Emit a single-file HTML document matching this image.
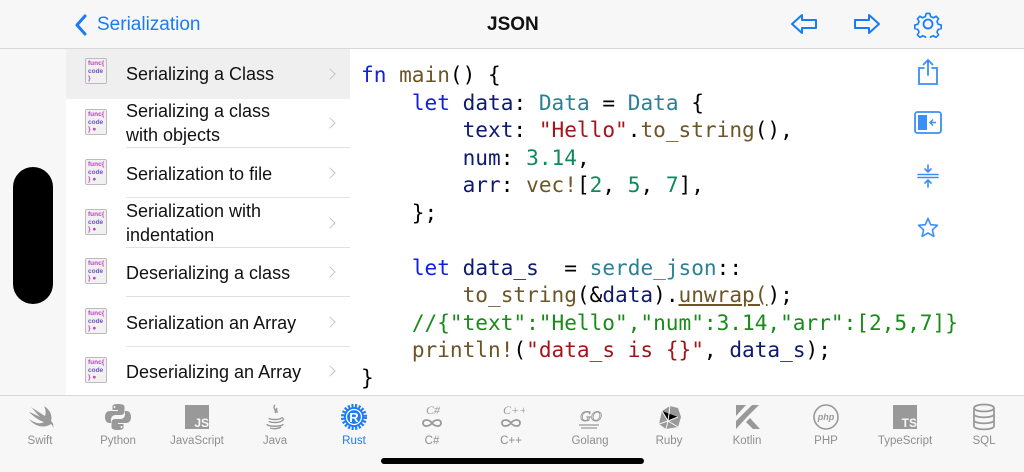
<!DOCTYPE html><html><head><meta charset="utf-8"><style>
*{margin:0;padding:0;box-sizing:border-box}
body{width:1024px;height:472px;overflow:hidden;background:#fff;font-family:"Liberation Sans",sans-serif;position:relative}
.hdr{position:absolute;left:0;top:0;width:1024px;height:49px;background:#f7f7f7;border-bottom:1px solid #d8d8d8}
.side{position:absolute;left:0;top:49px;width:66px;height:346px;background:#f7f7f7}
.pill{position:absolute;left:13px;top:167px;width:40px;height:137px;border-radius:20px;background:#000}
.row{position:absolute;left:66px;width:284px;height:50px}
.row .t{position:absolute;left:60px;font-size:18px;color:#111;line-height:24px}
.row .sep{position:absolute;left:60px;right:0;bottom:0;height:1px;background:#e2e2e2}
.row .ch{position:absolute;right:16px;top:15px;width:8px;height:8px;border-right:1.6px solid #c4c4c6;border-top:1.6px solid #c4c4c6;transform:rotate(45deg)}
.ic{position:absolute;left:19px;width:22px;height:26px;border:1px solid #bbb;border-radius:2px;background:#f1f1f1;font-size:6.5px;line-height:7.5px;font-weight:bold;padding:1px 0 0 2px}
.code{position:absolute;left:361px;top:61px;font-family:"DejaVu Sans Mono",monospace;font-size:21.1px;line-height:27.5px;white-space:pre;color:#000}
.k{color:#1020e0}.v{color:#0d1a70}.ty{color:#2b7f97}.s{color:#a3141c}.n{color:#0f8a5a}.f{color:#6e5528}.c{color:#1a8a1a}
.tab{position:absolute;left:0;top:395px;width:1024px;height:77px;background:#f7f7f7;border-top:1px solid #d8d8d8}
.ti{position:absolute;top:0;width:70px;text-align:center}
.ti .l{position:absolute;top:39px;left:0;width:70px;font-size:11.5px;color:#8e8e8e}
.ti svg{position:absolute;left:21px;top:7px}
</style></head><body>
<div class="hdr">
<svg style="position:absolute;left:74px;top:14px" width="14" height="22" viewBox="0 0 14 22"><path d="M11 2 L3 11 L11 20" fill="none" stroke="#1a7cf5" stroke-width="3" stroke-linecap="round" stroke-linejoin="round"/></svg>
<div style="position:absolute;left:97px;top:14px;font-size:19px;color:#1a7cf5">Serialization</div>
<div style="position:absolute;left:487px;top:14px;font-size:19px;font-weight:bold;color:#111">JSON</div>
<svg style="position:absolute;left:790px;top:12px" width="28" height="24" viewBox="0 0 28 24"><path d="M2 12 L12 3 V8 H26 V16 H12 V21 Z" fill="none" stroke="#1a7cf5" stroke-width="2" stroke-linejoin="round"/></svg>
<svg style="position:absolute;left:853px;top:12px" width="28" height="24" viewBox="0 0 28 24"><path d="M26 12 L16 3 V8 H2 V16 H16 V21 Z" fill="none" stroke="#1a7cf5" stroke-width="2" stroke-linejoin="round"/></svg>
<svg style="position:absolute;left:914px;top:10px" width="28" height="28" viewBox="0 0 28 28"><g fill="none" stroke="#1a7cf5" stroke-width="1.8"><circle cx="14" cy="14" r="4.5"/><path d="M12 2h4l1 3.5 3 1.5 3.2-1.8 2.8 2.8-1.8 3.2 1.3 3 3.5 1v4l-3.5 1-1.3 3 1.8 3.2-2.8 2.8-3.2-1.8-3 1.3-1 3.5h-4l-1-3.5-3-1.3-3.2 1.8-2.8-2.8 1.8-3.2-1.3-3-3.5-1v-4l3.5-1 1.3-3-1.8-3.2 2.8-2.8 3.2 1.8 3-1.5z" transform="translate(14 14) scale(.88) translate(-14 -14)"/></g></svg>
</div>
<div class="side"></div><div class="pill"></div>
<div class="row" style="top:49px;background:#efefef"><div class="ic" style="top:9px;color:#c040c0">func{<br><span style="color:#7050c0">code</span><br>}</div><div class="t" style="top:13px">Serializing a Class</div><div class="ch" style="top:21px"></div></div>
<div class="row" style="top:98px"><div class="ic" style="top:11px;color:#c040c0">func{<br><span style="color:#7050c0">code</span><br>} ●</div><div class="t" style="top:1px">Serializing a class<br>with objects</div><div class="ch" style="top:21px"></div><div class="sep"></div></div>
<div class="row" style="top:148px"><div class="ic" style="top:11px;color:#c040c0">func{<br><span style="color:#7050c0">code</span><br>} ●</div><div class="t" style="top:14px">Serialization to file</div><div class="ch" style="top:21px"></div><div class="sep"></div></div>
<div class="row" style="top:198px"><div class="ic" style="top:11px;color:#c040c0">func{<br><span style="color:#7050c0">code</span><br>} ●</div><div class="t" style="top:1px">Serialization with<br>indentation</div><div class="ch" style="top:21px"></div><div class="sep"></div></div>
<div class="row" style="top:247px"><div class="ic" style="top:11px;color:#c040c0">func{<br><span style="color:#7050c0">code</span><br>} ●</div><div class="t" style="top:14px">Deserializing a class</div><div class="ch" style="top:21px"></div><div class="sep"></div></div>
<div class="row" style="top:297px"><div class="ic" style="top:11px;color:#c040c0">func{<br><span style="color:#7050c0">code</span><br>} ●</div><div class="t" style="top:14px">Serialization an Array</div><div class="ch" style="top:21px"></div><div class="sep"></div></div>
<div class="row" style="top:346px"><div class="ic" style="top:11px;color:#c040c0">func{<br><span style="color:#7050c0">code</span><br>} ●</div><div class="t" style="top:14px">Deserializing an Array</div><div class="ch" style="top:21px"></div></div>
<div class="code"><span class="k">fn</span> <span class="f">main</span>() {
    <span class="k">let</span> <span class="v">data</span>: <span class="ty">Data</span> = <span class="ty">Data</span> {
        <span class="v">text</span>: <span class="s">"Hello"</span>.<span class="f">to_string</span>(),
        <span class="v">num</span>: <span class="n">3.14</span>,
        <span class="v">arr</span>: <span class="f">vec!</span>[<span class="n">2</span>, <span class="n">5</span>, <span class="n">7</span>],
    };

    <span class="k">let</span> <span class="v">data_s</span>  = <span class="ty">serde_json</span>::
        <span class="f">to_string</span>(&amp;<span class="v">data</span>).<span class="f" style="text-decoration:underline">unwrap(</span>);
    <span class="c">//{"text":"Hello","num":3.14,"arr":[2,5,7]}</span>
    <span class="f">println!</span>(<span class="s">"data_s is {}"</span>, <span class="v">data_s</span>);
}</div>
<svg style="position:absolute;left:916px;top:58px" width="24" height="28" viewBox="0 0 24 28"><g fill="none" stroke="#3a8ef5" stroke-width="1.8" stroke-linecap="round"><path d="M8 10H3v16h18V10h-5"/><path d="M12 2v15M7.5 6.5 12 2l4.5 4.5"/></g></svg>
<svg style="position:absolute;left:914px;top:111px" width="28" height="23" viewBox="0 0 28 23"><rect x="1" y="1" width="26" height="21" rx="2.5" fill="none" stroke="#3a8ef5" stroke-width="1.8"/><rect x="4" y="4" width="9" height="15" fill="#3a8ef5"/><path d="M22 11.5h-6M19 8.5l-3 3 3 3" fill="none" stroke="#3a8ef5" stroke-width="1.5"/></svg>
<svg style="position:absolute;left:917px;top:164px" width="22" height="24" viewBox="0 0 22 24"><g fill="none" stroke="#3a8ef5" stroke-width="1.6" stroke-linecap="round"><path d="M1 10.5h20M1 13.5h20M11 1v7M8 5l3 3 3-3M11 23v-7M8 19l3-3 3 3"/></g></svg>
<svg style="position:absolute;left:917px;top:217px" width="22" height="22" viewBox="0 0 22 22"><path d="M11 1.5l2.7 6.2 6.8.6-5.1 4.5 1.5 6.6L11 16l-5.9 3.4 1.5-6.6-5.1-4.5 6.8-.6z" fill="none" stroke="#3a8ef5" stroke-width="1.6" stroke-linejoin="round"/></svg>
<div class="tab">
<div class="ti" style="left:5px"><svg width="28" height="28" viewBox="0 0 28 28"><path d="M3 9c5 5 11 9 15 10-3 2-8 2-15-3 5 7 15 10 22 5 1 1 2 2 2 4 1-3 0-5-2-7 2-6-2-12-7-15 2 4 2 8 1 10C14 10 8 6 5 4c3 3 6 7 9 10C10 12 6 10 3 9z" fill="#999"/></svg><div class="l">Swift</div></div>
<div class="ti" style="left:83px"><svg width="28" height="28" viewBox="0 0 28 28"><path d="M13.5 1C8 1 8.5 3.5 8.5 3.5V7h5.5v1H6C3 8 1 10 1 14s2 6 4.5 6H7v-3.5C7 14 9 12 11.5 12h5.5c2 0 3.5-1.5 3.5-3.5V4c0-2-2-3-7-3zM10.5 3a1 1 0 110 2 1 1 0 010-2z" fill="#999"/><path d="M14.5 27c5.5 0 5-2.5 5-2.5V21H14v-1h8c3 0 5-2 5-6s-2-6-4.5-6H21v3.5C21 14 19 16 16.5 16H11c-2 0-3.5 1.5-3.5 3.5V24c0 2 2 3 7 3zm3-2a1 1 0 110-2 1 1 0 010 2z" fill="#999"/></svg><div class="l">Python</div></div>
<div class="ti" style="left:162px"><svg width="28" height="28" viewBox="0 0 28 28"><rect x="2" y="2" width="24" height="24" fill="#999"/><text x="26" y="24" text-anchor="end" font-family="Liberation Sans" font-weight="bold" font-size="12" fill="#f7f7f7">JS</text></svg><div class="l">JavaScript</div></div>
<div class="ti" style="left:240px"><svg width="28" height="28" viewBox="0 0 28 28"><g fill="none" stroke="#999" stroke-width="1.4"><path d="M14 2c-3 3 2 5 0 8M16 5c-2 2 1 3 0 5"/><path d="M8 15c0 2 12 2 12 0M8 18c0 2 12 2 12 0M6 21c0 3 16 3 16 0M9 25c3 1 8 1 11-1"/><path d="M20 15c3-1 3 3 0 3"/></g></svg><div class="l">Java</div></div>
<div class="ti" style="left:319px"><svg width="28" height="28" viewBox="0 0 28 28"><circle cx="14" cy="14" r="11" fill="none" stroke="#1a7cf5" stroke-width="4" stroke-dasharray="2 1.5"/><circle cx="14" cy="14" r="10" fill="#1a7cf5"/><circle cx="14" cy="14" r="7.5" fill="none" stroke="#fff" stroke-width="1.3"/><text x="14" y="19" text-anchor="middle" font-family="Liberation Sans" font-weight="bold" font-size="13" fill="#fff">R</text></svg><div class="l" style="color:#1a7cf5">Rust</div></div>
<div class="ti" style="left:397px"><svg width="28" height="28" viewBox="0 0 28 28"><text x="8" y="11" font-family="Liberation Serif" font-style="italic" font-size="12" fill="#999">C#</text><path d="M14 20c-3-4-9-4-9 0s6 4 9 0 9-4 9 0-6 4-9 0z" fill="none" stroke="#999" stroke-width="1.8"/></svg><div class="l">C#</div></div>
<div class="ti" style="left:476px"><svg width="28" height="28" viewBox="0 0 28 28"><text x="6" y="11" font-family="Liberation Serif" font-style="italic" font-size="12" fill="#999">C++</text><path d="M14 20c-3-4-9-4-9 0s6 4 9 0 9-4 9 0-6 4-9 0z" fill="none" stroke="#999" stroke-width="1.8"/></svg><div class="l">C++</div></div>
<div class="ti" style="left:555px"><svg width="28" height="28" viewBox="0 0 28 28"><text x="4" y="18" font-family="Liberation Serif" font-style="italic" font-size="15" fill="none" stroke="#999" stroke-width=".9">GO</text><path d="M3 22h20M5 25h16" stroke="#999" stroke-width="1.2"/></svg><div class="l">Golang</div></div>
<div class="ti" style="left:634px"><svg width="28" height="28" viewBox="0 0 28 28"><path d="M4 21 7 8 15 3l8 2 3 9-3 10-12 2z" fill="#999"/><path d="M7 8l6 10 10-4M13 18l-9 3M13 18l-2 8M13 18l10 6M15 3l-2 15" stroke="#f7f7f7" stroke-width="1"/></svg><div class="l">Ruby</div></div>
<div class="ti" style="left:712px"><svg width="28" height="28" viewBox="0 0 28 28"><path d="M3 2h10L3 13zM3 26 14 14l12-12h-7L3 18zM13 19l7 7h7l-10-11z" fill="#999"/></svg><div class="l">Kotlin</div></div>
<div class="ti" style="left:791px"><svg width="28" height="28" viewBox="0 0 28 28"><circle cx="14" cy="14" r="12" fill="none" stroke="#999" stroke-width="1.6"/><text x="14" y="17" text-anchor="middle" font-family="Liberation Sans" font-style="italic" font-weight="bold" font-size="9" fill="#999">php</text></svg><div class="l">PHP</div></div>
<div class="ti" style="left:870px"><svg width="28" height="28" viewBox="0 0 28 28"><rect x="2" y="2" width="24" height="24" fill="#999"/><text x="26" y="24" text-anchor="end" font-family="Liberation Sans" font-weight="bold" font-size="12" fill="#f7f7f7">TS</text></svg><div class="l">TypeScript</div></div>
<div class="ti" style="left:949px"><svg width="28" height="28" viewBox="0 0 28 28"><g fill="none" stroke="#999" stroke-width="1.8"><ellipse cx="14" cy="5" rx="10" ry="3.5"/><path d="M4 5v18c0 4.5 20 4.5 20 0V5M4 11c0 4.5 20 4.5 20 0M4 17c0 4.5 20 4.5 20 0"/></g></svg><div class="l">SQL</div></div>
<div style="position:absolute;left:381px;top:62px;width:263px;height:6px;border-radius:3px;background:#000"></div>
</div>
</body></html>
